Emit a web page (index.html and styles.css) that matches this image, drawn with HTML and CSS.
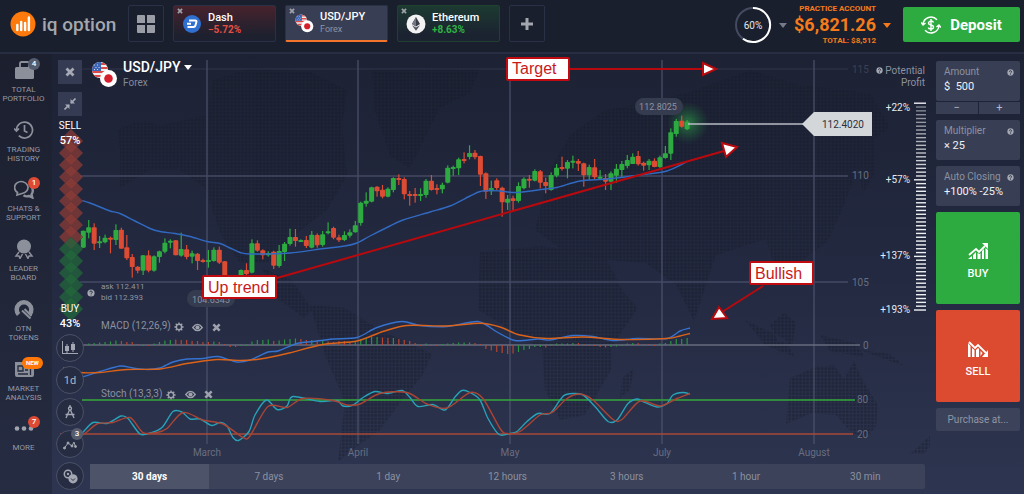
FILE: index.html
```html
<!DOCTYPE html>
<html lang="en">
<head>
<meta charset="utf-8">
<title>IQ Option – USD/JPY</title>
<link rel="stylesheet" href="styles.css">
</head>
<body>
<svg class="defs" aria-hidden="true">
  <defs>
    <symbol id="i-flags" viewBox="0 0 28 28">
      <clipPath id="us"><circle cx="10" cy="10" r="8"/></clipPath>
      <g clip-path="url(#us)">
        <rect width="20" height="20" fill="#f0eef0"/>
        <path d="M2 8h16M2 12h16M2 16h16M2 4h16" stroke="#dd4a48" stroke-width="2"/>
        <rect width="11" height="11" fill="#3c66b4"/>
        <path d="M4 5h1M7 5h1M5.500 7.500h1M8.500 7.500h1M4 9.500h1M7 9.500h1" stroke="#c9d6ef"/>
      </g>
      <circle cx="18.500" cy="18.500" r="8.500" fill="#fff"/>
      <circle cx="18.500" cy="18.500" r="4.300" fill="#d51f2c"/>
    </symbol>
    <symbol id="i-close" viewBox="0 0 10 10"><path d="M1.500 1.500l7 7M8.500 1.500l-7 7" stroke="currentColor" stroke-width="2.800"/></symbol>
    <symbol id="i-help" viewBox="0 0 10 10"><circle cx="5" cy="5" r="4.500" fill="#a3a8b3"/><path d="M3.500 4a1.500 1.500 0 1 1 2.200 1.300q-.7.400-.7 1M5 7v1" fill="none" stroke="#23283a" stroke-width="1.200"/></symbol>
    <symbol id="i-gear" viewBox="0 0 12 12"><circle cx="6" cy="6" r="3.200" fill="none" stroke="currentColor" stroke-width="1.800"/><path d="M6 .5v2M6 9.500v2M.5 6h2M9.500 6h2M2.100 2.100l1.400 1.400M8.500 8.500l1.400 1.400M9.900 2.100L8.500 3.500M3.500 8.500L2.100 9.900" stroke="currentColor" stroke-width="1.600"/></symbol>
    <symbol id="i-eye" viewBox="0 0 12 12"><path d="M.8 6Q6-1 11.200 6 6 13 .8 6z" fill="none" stroke="currentColor" stroke-width="1.400"/><circle cx="6" cy="6" r="2.300" fill="currentColor"/></symbol>
    <pattern id="dots" width="3.600" height="3.600" patternUnits="userSpaceOnUse"><rect width="2.600" height="2.600" rx=".8" fill="#151a26"/></pattern>
    <radialGradient id="glow"><stop offset="0" stop-color="#2fa84a" stop-opacity=".65"/><stop offset="1" stop-color="#1f7a3c" stop-opacity="0"/></radialGradient>
  </defs>
</svg>

<header class="topbar">
  <div class="brand">
    <svg width="26" height="26" viewBox="0 0 26 26" aria-hidden="true"><circle cx="13" cy="13" r="12.500" fill="#ff7a0c"/><path d="M7.300 19v-5M11.200 19v-8M15.100 19v-7M18.900 19V6.500" stroke="#fff" stroke-width="2.400" stroke-linecap="round"/></svg>
    <span>iq option</span>
  </div>
  <button class="square" aria-label="Layouts"><svg width="18" height="18" viewBox="0 0 18 18"><path d="M1 0h6q1 0 1 1v7H0V1q0-1 1-1zM10 0h7q1 0 1 1v7h-8zM0 10h8v8H1q-1 0-1-1zM10 10h8v7q0 1-1 1h-7z" fill="#9a9da5"/></svg></button>
  <nav class="tabs" aria-label="Assets">
    <button class="tab down">
      <svg class="x"><use href="#i-close"/></svg>
      <svg class="coin" viewBox="0 0 20 20"><circle cx="10" cy="10" r="9" fill="#2f6fd0"/><path d="M7 6.500h6.200q1.600 0 1.200 1.500l-1 3.500q-.4 1.500-2 1.500H5.500M5 9.800h4" fill="none" stroke="#fff" stroke-width="2"/></svg>
      <span><b>Dash</b><em>−5.72%</em></span>
    </button>
    <button class="tab active">
      <svg class="x"><use href="#i-close"/></svg>
      <svg class="coin"><use href="#i-flags"/></svg>
      <span><b>USD/JPY</b><small>Forex</small></span>
    </button>
    <button class="tab up">
      <svg class="x"><use href="#i-close"/></svg>
      <svg class="coin" viewBox="0 0 20 20"><circle cx="10" cy="10" r="9.500" fill="#f2f2f2"/><path d="M10 3l4 7-4 2.500L6 10z" fill="#3a3d48"/><path d="M10 3v9.500L6 10z" fill="#737784"/><path d="M6 11.200l4 2.400 4-2.400-4 5.500z" fill="#50535f"/></svg>
      <span><b>Ethereum</b><em>+8.63%</em></span>
    </button>
  </nav>
  <button class="square" aria-label="Add asset"><svg width="14" height="14" viewBox="0 0 14 14"><path d="M7 1v12M1 7h12" stroke="#a3a6ad" stroke-width="3"/></svg></button>
  <div class="account">
    <svg class="ring" width="38" height="38" viewBox="0 0 38 38"><circle cx="19" cy="19" r="17" fill="none" stroke="#444a60" stroke-width="2"/><path d="M19 2a17 17 0 1 1-10 30.700" fill="none" stroke="#fff" stroke-width="2"/><text x="19" y="22.500" text-anchor="middle">60%</text></svg>
    <i class="caret"></i>
    <div class="balance"><small>PRACTICE ACCOUNT</small><strong>$6,821.26</strong><small>TOTAL: $8,512</small></div>
    <i class="caret orange"></i>
  </div>
  <button class="deposit">
    <svg width="20" height="20" viewBox="0 0 20 20" fill="none" stroke="#fff" stroke-width="1.400"><path d="M2 9.500A8 8 0 0 1 16 4.800M18 10.500A8 8 0 0 1 4 15.200M0 7.500l2 2.500 2.500-2M20 12.500L18 10l-2.500 2"/><path d="M12.500 7.500Q12 6 10 6T7.500 8q0 1.500 2.500 2t2.500 2Q12.500 14 10 14t-2.500-1.500M10 4v12"/></svg>
    Deposit
  </button>
</header>

<main class="workspace">
  <nav class="side" aria-label="Main">
    <a href="#"><span class="icon"><svg width="20" height="20" viewBox="0 0 20 20"><rect x="1" y="7" width="19" height="12" rx="1.500" fill="#8c909b"/><path d="M6 7V3.500Q6 2 7.500 2h6Q15 2 15 3.500V7" fill="none" stroke="#8c909b" stroke-width="1.800"/></svg><b class="badge grey">4</b></span>TOTAL<br>PORTFOLIO</a>
    <a href="#"><span class="icon"><svg width="20" height="20" viewBox="0 0 20 20" fill="none" stroke="#8c909b" stroke-width="1.700"><path d="M2.500 10a8 8 0 1 1 2.300 5.700M0 8.500l2.500 2.500L5 8.500M10.500 5v6l3 1.500"/></svg></span>TRADING<br>HISTORY</a>
    <a href="#"><span class="icon"><svg width="20" height="20" viewBox="0 0 20 20" fill="none" stroke="#8c909b" stroke-width="1.700"><path d="M3.500 13.500A6.700 6 0 1 1 8 14.500L3 16z"/><path d="M16.500 7q2.500 1.500 2.300 5-.2 2-1.300 3.500l.8 3-3.300-1.500q-3 1-5.500-.8" stroke-width="2.400"/></svg><b class="badge red">1</b></span>CHATS &amp;<br>SUPPORT</a>
    <a href="#"><span class="icon"><svg width="20" height="20" viewBox="0 0 20 20"><circle cx="10" cy="7.500" r="7" fill="#8c909b"/><path d="M5 13l-3 4h3l1 2.500L8.500 15M15 13l3 4h-3l-1 2.500L11.500 15" fill="none" stroke="#8c909b" stroke-width="1.500"/></svg></span>LEADER<br>BOARD</a>
    <a href="#"><span class="icon"><svg width="20" height="20" viewBox="0 0 20 20"><path d="M4.600 15.500A7.300 7.300 0 1 1 15.500 15.400" fill="none" stroke="#8c909b" stroke-width="4.500"/><path d="M8 11.500l8.500 8M10.500 10l7 7" stroke="#8c909b" stroke-width="2"/></svg></span>OTN<br>TOKENS</a>
    <a href="#"><span class="icon"><svg width="20" height="20" viewBox="0 0 20 20"><path d="M1 3h15v4h4v9q0 2-2 2H3q-2 0-2-2z" fill="#8c909b"/><path d="M4 7h5v5H4zM11 8h3M11 11h3M4 15h10M16.500 7v9" fill="none" stroke="#242a3d" stroke-width="1.300"/></svg><b class="badge new">NEW</b></span>MARKET<br>ANALYSIS</a>
    <a href="#"><span class="icon"><svg width="20" height="20" viewBox="0 0 20 20" fill="#a0a4ae"><circle cx="3" cy="10.500" r="2.300"/><circle cx="10" cy="10.500" r="2.300"/><circle cx="17" cy="10.500" r="2.300"/></svg><b class="badge red">7</b></span>MORE</a>
  </nav>

  <section class="stage" aria-label="USD/JPY chart">
    <svg class="chart" viewBox="52 54 878 440">
      <g fill="url(#dots)" opacity=".4">
        <path d="M120 150l-3-20 20-9 25 4 45-10 6-35 38-12 60 4 36 18-5 35 5 50-20 35-32 25-25 28-30 0-20-30-15-45-25-18-30 0-30 18z"/>
        <path d="M372 70l108-2-10 25-30 15-15 30-15 30-20-12-15-45z"/>
        <path d="M262 268l30 12 20 30-8 8-30-22zM310 305l35 3 35 22 52 24-10 22-20 24-22 30-28 20-14 12 7-60-20-47z"/>
        <path d="M480 252l60-6 64 8 18 36 16 18-26 38-1 24-26 45-25 5-15-30-3-40-42-27-22-13z"/>
        <path d="M622 378l12-10-4 22-10 8z"/>
        <path d="M535 230l15-60 20-35 35-25 45-8 40-10 60-22 50 15 70 8 20 35-15 10 0 35-12 20-5-25-15 40-15 33-20 15-20 20-14-12-8-25-50 16-22 66-18-36-30-22-50-4-35-10z"/>
        <path d="M745 320l20 25 30 12-10-18zM770 325l14-12 12 10-4 22-14-4zM820 335l35 8 10 14-35-6zM860 350l30 4 14 12"/>
        <path d="M786 424l4-46 26-11 18-2 10 14 10-18 8 18 16 26-2 22-12 12-16-10-12-14-24-2zM930 436l8 0-14 18-14 0z"/>
      </g>
      <g stroke="#505670" stroke-width="1.500" opacity=".75">
        <path d="M80 69H848" opacity=".35"/><path d="M80 176H848M80 282H848"/>
        <path d="M207 60V444M358 60V444M510 60V444M662 60V444M814 60V444"/>
        <path d="M82 345H860" stroke="#7c8192"/>
      </g>
      <path d="M82 400H855" stroke="#35a83b" stroke-width="1.500"/><path d="M60 434H853" stroke="#a84a38" stroke-width="1.300"/>
      <g class="axis">
        <text x="852" y="73" opacity=".4">115</text><text x="852" y="179">110</text><text x="852" y="286">105</text>
        <text x="863" y="349">0</text><text x="857" y="403">80</text><text x="857" y="438">20</text>
        <g text-anchor="middle"><text x="207" y="456">March</text><text x="358" y="456">April</text><text x="510" y="456">May</text><text x="662" y="456">July</text><text x="814" y="456">August</text></g>
      </g>
      <circle cx="688" cy="123" r="21" fill="url(#glow)"/>
      <g id="candles"></g>
      <g id="lines" fill="none" stroke-linejoin="round" stroke-width="1.400"></g>
      <g id="sentiment"></g>

      <path d="M688 124H806" stroke="#b9bdc6" stroke-width="1.300"/>
      <path d="M802 124l12-12h58v24h-58z" fill="#d3d7da"/><text class="price" x="843" y="128" text-anchor="middle">112.4020</text>
      <g class="pill"><rect x="635" y="98" width="48" height="17" rx="8.500"/><text x="658" y="110" text-anchor="middle">112.8025</text>
      <rect x="187" y="290" width="48" height="17" rx="8.500"/><text x="211" y="303" text-anchor="middle">104.6345</text></g>

      <g class="quote"><use href="#i-help" x="87" y="289" width="8" height="8"/><text x="101" y="289">ask 112.411</text><text x="101" y="300">bid 112.393</text></g>
      <g class="indicator"><text x="101" y="329">MACD (12,26,9)</text><use href="#i-gear" x="174" y="322" width="10" height="10"/><use href="#i-eye" x="192" y="322" width="11" height="11"/><use href="#i-close" x="212" y="323" width="9" height="9"/>
      <text x="101" y="397">Stoch (13,3,3)</text><use href="#i-gear" x="166" y="390" width="10" height="10"/><use href="#i-eye" x="185" y="389" width="11" height="11"/><use href="#i-close" x="204" y="390" width="9" height="9"/></g>

      <g id="ladder"></g>
      <g class="levels" text-anchor="end"><text x="910" y="111">+22%</text><text x="910" y="183">+57%</text><text x="910" y="259">+137%</text><text x="910" y="313">+193%</text></g>

      <g class="note">
        <path d="M277 278L724 151M570 69H704M763 286L722 312"/>
        <path class="head" d="M722 143l15 4-11 10zM703 63l13 6-13 6zM719 307l8 11-15 1z"/>
        <rect x="507" y="58" width="62" height="22" rx="1"/><rect x="203" y="276" width="73" height="22" rx="1"/><rect x="750" y="262" width="63" height="22" rx="1"/>
        <text x="512" y="74">Target</text><text x="208" y="293">Up trend</text><text x="755" y="279">Bullish</text>
      </g>
    </svg>

    <div class="overlay">
      <div class="tools">
        <button class="box" aria-label="Close chart"><svg width="10" height="10"><use href="#i-close"/></svg></button>
        <button class="box" aria-label="Shrink chart"><svg width="12" height="12" viewBox="0 0 12 12"><path d="M6.500 1v4.500H11zM1 6.500h4.500V11z" fill="#a6aab4"/><path d="M7 5l4.500-4.500M5 7L.5 11.500" stroke="#a6aab4" stroke-width="1.600"/></svg></button>
        <p class="mood"><span>SELL</span><b>57%</b></p>
        <p class="mood buyers"><span>BUY</span><b>43%</b></p>
        <button class="round" aria-label="Chart type"><svg width="16" height="14" viewBox="0 0 16 14" fill="#a3a7b1"><path d="M0 0h1v12h15v1H0z"/><path d="M3 5h4v5H3zM9 3h4v6H9zM4.500 3h1v9h-1zM10.500 1h1v10h-1z"/></svg></button>
        <button class="round">1d</button>
        <button class="round" aria-label="Drawing tools"><svg width="14" height="14" viewBox="0 0 14 14" fill="none" stroke="#a3a7b1" stroke-width="1.300"><circle cx="7" cy="3.500" r="1.500"/><path d="M7 0v2M6.500 5L3 13M7.500 5L11 13M2.500 9.500h9"/></svg></button>
        <button class="round" aria-label="Indicators"><svg width="14" height="12" viewBox="0 0 14 12" fill="#a3a7b1" stroke="#a3a7b1"><path d="M1.500 10l3.500-5 4 3 2-4 1.500 5" fill="none"/><circle cx="1.500" cy="10" r="1"/><circle cx="5" cy="5" r="1"/><circle cx="9" cy="8" r="1"/><circle cx="12.500" cy="8.500" r="1"/></svg><b class="badge grey">3</b></button>
        <button class="round" aria-label="Trades"><svg width="15" height="15" viewBox="0 0 15 15"><circle cx="5" cy="5" r="3.700" fill="none" stroke="#a3a7b1" stroke-width="1.500"/><circle cx="5" cy="5" r="1.200" fill="#a3a7b1"/><circle cx="10" cy="9.800" r="4.600" fill="#a3a7b1"/><path d="M8 9.500l2 2 2-2" fill="none" stroke="#2c3249"/></svg></button>
      </div>
      <div class="pane">
        <div class="head">
          <button class="pair"><svg width="28" height="28"><use href="#i-flags"/></svg><span><b>USD/JPY <i class="caret white"></i></b><small>Forex</small></span></button>
          <p class="potential"><svg width="7" height="7"><use href="#i-help"/></svg> Potential<br>Profit</p>
        </div>
        <nav class="ranges" aria-label="Time range"><button class="on">30 days</button><button>7 days</button><button>1 day</button><button>12 hours</button><button>3 hours</button><button>1 hour</button><button>30 min</button></nav>
      </div>
    </div>
  </section>

  <aside class="deal">
    <div class="amount">
      <label class="field"><span>Amount <svg width="7" height="7"><use href="#i-help"/></svg></span><input type="text" value="$  500"></label>
      <div class="steps"><button>−</button><button>+</button></div>
    </div>
    <label class="field"><span>Multiplier <svg width="7" height="7"><use href="#i-help"/></svg></span><input type="text" value="× 25"></label>
    <label class="field"><span>Auto Closing <svg width="7" height="7"><use href="#i-help"/></svg></span><input type="text" value="+100% -25%"></label>
    <button class="trade buy"><svg width="21" height="17" viewBox="0 0 21 17"><path d="M1 12l7-6 3 3 6-6" fill="none" stroke="#fff" stroke-width="1.800"/><path d="M14 0h6v6zM0 16l4-3v3zM5 12l3-3v7H5zM9.500 10l2 1 1-1v6h-3zM14 8l2-2v10h-2zM17.500 5L20 7v9h-2.500z" fill="#fff"/></svg>BUY</button>
    <button class="trade sell"><svg width="21" height="17" viewBox="0 0 21 17"><path d="M1 1l6 6 3-3 8 8" fill="none" stroke="#fff" stroke-width="1.800"/><path d="M20 16h-6l6-7zM0 2l2.500 3v11H0zM4 7l2.500 2v7H4zM8 9l2-2 1 1v8H8zM12.500 10l2 2-2 3z" fill="#fff"/></svg>SELL</button>
    <button class="later">Purchase at...</button>
  </aside>
</main>
<script src="chart.js"></script>
</body>
</html>
```
FILE: styles.css
```css
* { box-sizing: border-box; }
body { margin: 0; min-height: 100vh; display: flex; flex-direction: column; font-family: Roboto, "Liberation Sans", sans-serif; color: #fff; background: linear-gradient(#1b2031, #232940 55%, #2e3550); }
button { font: inherit; color: inherit; border: 0; padding: 0; background: none; cursor: pointer; }
p { margin: 0; }
.defs { position: absolute; width: 0; height: 0; }

.topbar { display: flex; align-items: flex-start; height: 54px; padding: 5px 4px 0 10px; background: #1a1f2d; border-bottom: 2px solid #272d42; }
.brand { display: flex; align-items: center; gap: 6px; width: 118px; height: 38px; color: #a4a7ae; font: 500 19px Roboto, sans-serif; white-space: nowrap; }
.square { display: grid; place-items: center; width: 36px; height: 37px; border: 1px solid #2a3046; border-radius: 2px; }
.tabs { display: flex; gap: 9px; margin: 0 9px; }
.tab { display: flex; align-items: center; gap: 6px; width: 103px; height: 37px; padding-left: 3px; border: 1px solid #2a3046; border-radius: 2px; text-align: left; }
.tab.down { background: linear-gradient(#47232d, #1d202e 85%); }
.tab.up { background: linear-gradient(#1c3a31, #1b2230 85%); border-color: #22402f; }
.tab.active { background: #383e54; border-bottom: 2px solid #f4742b; }
.tab .x { align-self: flex-start; width: 6px; height: 6px; margin-top: 2px; margin-right: -7px; color: #9fa2aa; }
.tab .coin { width: 20px; height: 20px; }
.tab span { display: flex; flex-direction: column; }
.tab b { font-size: 11px; line-height: 12px; font-weight: 500; }
.tab em { font: bold 10px/12px Roboto, sans-serif; color: #e04f44; }
.tab.up em { color: #2fb344; }
.tab small { font-size: 9px; line-height: 12px; color: #8f93a2; }

.account { display: flex; align-items: center; gap: 7px; margin-left: auto; margin-right: 12px; height: 40px; }
.ring text { font-size: 10px; fill: #e6e7ea; }
.balance { display: flex; flex-direction: column; align-items: flex-end; color: #f57b1a; font-weight: 500; }
.balance small { font-size: 8px; line-height: 10px; font-weight: 700; }
.balance strong { font-size: 18px; line-height: 22px; font-weight: 700; }
.caret { display: inline-block; border: 4px solid transparent; border-top: 5px solid #757a88; border-bottom: 0; }
.caret.orange { border-top-color: #f57b1a; }
.caret.white { border-top-color: #fff; vertical-align: 2px; }
.deposit { display: flex; align-items: center; justify-content: center; gap: 9px; width: 117px; height: 35px; margin-top: 2px; border-radius: 2px; background: #2eab40; font-weight: 700; font-size: 15px; }

.workspace { flex: 1; display: grid; grid-template-columns: 52px minmax(0, 1fr) 94px; }
.side { display: grid; grid-auto-rows: 1fr; padding-bottom: 22px; background: linear-gradient(#1b1f2e, #262c42); }
.side a { padding-top: 6px; margin-right: 5px; color: #9499a6; font-size: 8px; line-height: 9px; text-align: center; text-decoration: none; }
.side .icon { display: grid; justify-content: center; position: relative; margin-bottom: 5px; }
.badge { position: absolute; display: grid; place-items: center; height: 12px; min-width: 12px; border-radius: 6px; font-size: 8px; line-height: 12px; font-weight: 500; color: #fff; }
.badge.grey { background: #555c6e; }
.badge.red { background: #de4a33; }
.badge.new { background: #ff7708; padding: 0 4px; font-size: 6px; font-weight: 700; }
.icon .badge { left: 28px; top: -2px; }
.icon .badge.new { left: 22px; }
.round .badge { right: 0; top: -3px; }

.stage { display: grid; align-items: start; }
.chart, .overlay { grid-area: 1 / 1; }
.chart { width: 100%; display: block; }
.overlay { display: grid; grid-template-columns: 38px minmax(0, 1fr); height: 100%; pointer-events: none; }
.overlay button { pointer-events: auto; }
.tools { display: flex; flex-direction: column; align-items: center; gap: 4px; padding: 6px 2px 4px 0; }
.box { display: grid; place-items: center; width: 24px; height: 24px; margin-bottom: 4px; background: #343b52; color: #a6aab4; }
.box + .box { margin-bottom: 0; }
.mood { display: flex; flex-direction: column; gap: 2px; text-align: center; }
.mood span { font-size: 10px; line-height: 12px; }
.mood b { font-weight: 500; font-size: 11px; line-height: 13px; }
.buyers { margin-top: auto; }
.round { display: grid; place-items: center; position: relative; width: 28px; height: 28px; flex: none; border: 1px solid #4a5066; border-radius: 50%; background: #262c42; color: #b2b5be; font-size: 11px; }
.pane { display: flex; flex-direction: column; justify-content: space-between; padding: 6px 5px 5px 0; }
.head { display: flex; justify-content: space-between; }
.pair { display: flex; gap: 5px; text-align: left; }
.pair span { display: flex; flex-direction: column; }
.pair b { font-weight: 500; font-size: 14px; line-height: 15px; }
.pair small { font-size: 10px; line-height: 16px; color: #84899a; }
.potential { text-align: right; padding-top: 5px; font-size: 10px; line-height: 12px; color: #8c91a0; }
.ranges { display: flex; background: #3b425a; border-radius: 2px; }
.ranges button { flex: 1; height: 25px; font-size: 10px; color: #8c91a0; }
.ranges .on { background: #4d5469; color: #fff; font-weight: 700; }

.axis text { font-size: 10px; fill: #686e80; }
.price { font-size: 10px; fill: #2a2f3c; }
.pill rect { fill: #363c50; }
.pill text { font-size: 9px; fill: #8c91a0; }
.quote text { font-size: 8px; fill: #9196a4; }
.indicator { color: #9ea2ad; }
.indicator text { font-size: 10px; fill: #8c91a0; }
.levels text { font-size: 10px; fill: #e8eaee; }
.note path { fill: none; stroke: #b80a0e; stroke-width: 2; }
.note .head { fill: #fff; }
.note rect { fill: #fff; stroke: #c00c10; stroke-width: 2; }
.note text { font: 16px "Liberation Sans", Arial, sans-serif; fill: #c81a1c; }

.deal { display: flex; flex-direction: column; gap: 6px; padding: 7px 4px 0 6px; }
.field { display: flex; flex-direction: column; height: 40px; padding: 4px 6px 0 8px; background: #383f55; border-radius: 2px; }
.field span { display: flex; align-items: center; justify-content: space-between; font-size: 10px; line-height: 14px; color: #8c91a0; }
.field input { width: 100%; padding: 0; border: 0; background: none; color: #f0f1f4; font: 11px/16px Roboto, sans-serif; white-space: pre; }
.steps { display: grid; grid-template-columns: 1fr 1fr; gap: 1px; margin-top: 1px; }
.steps button { height: 12px; background: #383f55; color: #b6bac4; font-size: 11px; line-height: 12px; }
.trade { display: flex; flex-direction: column; align-items: center; justify-content: center; gap: 7px; height: 92px; padding-top: 6px; border-radius: 2px; font-weight: 500; font-size: 11px; line-height: 13px; }
.buy { background: #2eab40; }
.sell { background: #dc4a30; }
.later { height: 23px; background: #3b425a; border-radius: 2px; color: #9095a4; font-size: 10px; }
```
FILE: chart.js
```js
const NS = 'http://www.w3.org/2000/svg';
const GREEN = '#2eab40', RED = '#dc4b33';
const START = 83.3, STEP = 5.44;

function add(parent, tag, attrs) {
  const node = document.createElementNS(NS, tag);
  for (const key in attrs) node.setAttribute(key, attrs[key]);
  parent.appendChild(node);
}
const group = id => document.getElementById(id);

// Candles: high, body top, body bottom, low (thirds of a pixel below base), colour.
const candleRuns = [
  { base: 180, rows: '152,152,203,203g 120,142,158,175g 130,142,191,210r 168,184,190,204g 164,173,187,190g 170,173,176,220r 133,150,180,195g 143,149,206,206r 165,202,235,240r 222,231,261,293r 258,260,272,280r 225,226,272,285g 211,226,272,277r 226,229,272,275g 212,214,231,248g 175,188,215,220g 178,182,188,205g 180,181,226,226r 158,207,227,230g 195,208,231,238r 212,220,230,250g 219,221,243,270r 236,240,246,248r 210,240,245,263g 202,209,243,245g 200,209,248,252r 243,244,295,298r 288,290,310,315r 288,292,310,320g 268,270,290,300g 250,270,282,285r 178,190,278,280g 181,190,212,215r 208,211,226,238r 214,219,226,230g 212,215,257,267r 195,213,258,263g 186,191,216,243g 146,171,192,197g 147,171,183,200r 178,180,183,185g 168,180,198,204r 153,164,203,205g 160,165,196,203r 153,163,195,200g 127,154,160,163g 140,144,173,178r 164,172,181,186r 154,165,180,183g 148,157,167,173g 123,136,157,158g 65,68,129,137g 37,62,71,80g 20,22,65,67g' },
  { base: 130, rows: '168,170,184,200r 165,179,200,205r 172,176,200,202g 142,144,180,187g 133,144,150,165r 142,147,193,208r 183,192,197,227r 174,192,197,218r 175,192,197,213g 147,152,195,203g 135,152,180,182r 163,174,179,193r 158,164,178,190g 106,113,158,160g 107,111,116,137g 83,88,115,135g 67,87,92,100r 46,69,81,88g 60,68,82,88r 77,78,134,168r 127,130,185,207r 152,174,184,195g 145,151,174,180r 170,173,217,260r 195,206,218,240g 197,205,213,240r 157,168,213,218g 142,146,175,178g 135,146,151,173r 118,123,152,154g 120,124,158,175r 143,156,168,190r 127,135,180,182g 102,113,137,142g' },
  { base: 90, rows: '200,231,236,242r 210,216,236,265g 197,212,215,235g 207,213,221,243r 218,220,256,290r 224,231,256,270g 207,232,262,270r 240,260,265,270g 252,264,275,300r 244,250,275,300g 222,236,257,278g 213,222,240,262g 195,210,228,235g 190,200,222,222g 183,198,223,227r 215,218,227,242r 207,212,226,240g 205,212,231,232r 197,202,231,234g 168,190,204,206g 115,127,191,210g 87,93,132,140g 77,92,110,113r 90,95,118,120g' }
];
let index = 0;
for (const run of candleRuns) {
  for (const row of run.rows.split(' ')) {
    const [high, top, bottom, low] = row.slice(0, -1).split(',').map(v => run.base + v / 3);
    const fill = row.endsWith('g') ? GREEN : RED;
    const x = START + STEP * index++;
    add(group('candles'), 'rect', { x: x - 0.6, y: high, width: 1.2, height: low - high, fill });
    add(group('candles'), 'rect', { x: x - 2.5, y: top, width: 5, height: Math.max(bottom - top, 2), rx: 0.8, fill });
  }
}

// MACD histogram, one bar per candle.
const bars = 'g-1 g1.5 g2 g2.5 g3 g3.5 g4.5 r4 r3 r3 r1 g-1 r-1 g1.5 g3 g4.5 g5 r5.5 r5 r5 r4 r4 r3 r3 g3.5 r3 r1 r-2 r-2 g-1 g-1 g3.5 g5 g5 g5.5 r4 g4.5 g5.5 g6 g6.5 r6 r5 g5 r4.5 g5 r3.5 r3 r4 r4 r3 g3 g6 g7 g8 g8 r7.5 r7 g7 r6 r5 r4 r2 r-1 g1.5 r-1 r-1 g1 g1.5 g2 g2.5 g2.5 g2.5 r2 r1 r-4 r-5.5 r-7 r-8 r-9 r-8.5 g-7 g-5 g-4 g-2 g-2 r-2.5 g1 g1.5 g1.5 g1.5 g2 r2 r1 r-1 r-1 r-2 r-2.5 g-2 g-1.5 g-1 g1.5 g2 r2 r1 r1 r-1 g1.5 g2 g4 g6 g6 g7';
bars.split(' ').forEach((bar, i) => {
  const size = Number(bar.slice(1));
  add(group('candles'), 'rect', { x: START + STEP * i - 0.6, y: size > 0 ? 345 - size : 345, width: 1.2, height: Math.abs(size), fill: bar[0] === 'g' ? '#2b9340' : '#b5452f' });
});

// Smooth curve through the points.
function curve(points, stroke) {
  const p = points.split(' ').map(s => s.split(',').map(Number));
  let d = `M${p[0]}`;
  for (let i = 0; i < p.length - 1; i++) {
    const a = p[i - 1] || p[i], b = p[i], c = p[i + 1], e = p[i + 2] || c;
    d += `C${b[0] + (c[0] - a[0]) / 7} ${b[1] + (c[1] - a[1]) / 7} ${c[0] - (e[0] - b[0]) / 7} ${c[1] - (e[1] - b[1]) / 7} ${c[0]} ${c[1]}`;
  }
  add(group('lines'), 'path', { d, stroke });
}
curve('82,200.500 90,203 100,207 110,211 120,213.500 135,221 150,228.500 160,231.500 175,233.500 190,236.500 207,241.500 220,243.500 230,248 240,252.500 250,254 290,253 320,249 345,246 357,243 370,236 390,226 403,220 430,212 450,206 470,196 480,191.500 490,190.500 500,191 517,192.500 545,189 557,187.500 580,181 607,179 640,175 667,171 687,161.700', '#3169c0');
curve('64,374 72,377 80,377.500 100,371.500 120,366 133,368 147,369.500 160,368 173,362 187,359 203,358.500 218,356.500 237,362 250,360 268,352 278,351 297,343.500 313,341.500 333,339 357,337.500 377,327.500 402,321.500 420,325.500 447,326.500 478,321.500 497,332 515,340.500 538,339 550,340 573,335.500 593,336.500 613,340.500 637,338.500 667,338.500 680,331 690,328', '#3672cf');
curve('63,368 80,372.500 100,372.500 127,369.500 160,369 187,363.500 217,359.500 240,360.500 260,359 287,353.500 323,344.500 357,341 383,331.500 407,325.500 447,326 480,323.300 500,327 520,335 547,338.500 583,337 623,339.500 667,338.500 680,336 690,333.500', '#db6319');
curve('63,434 72,436.500 82,433 93,422.500 107,423.500 121,416 128,418.500 140,434 150,433 162,427.500 173,411.500 182,412 190,419 200,419 211.500,425.500 220,422.500 227,426 233,437.500 238.500,440.500 249,431.500 255,415 266.500,400 277,409.500 287,406 293,396.500 320,401.500 337,400.500 343,406 353,405 363,397.500 375,391.500 387,393.500 402,390.500 410,397.500 418,406.500 433,404.500 445,410 455,397 462,390.500 470,392.500 480,400 488,418.500 499,434.500 510,433.500 517,431.500 527,421.500 538,413.500 550,413.500 560,400 566,394.500 582,394.500 595,406.500 608,421.500 617,420 628,403.500 637,399 643,401.500 657,407 667,403.500 673,395 683,392.500 690,394', '#27a2b8');
curve('63,432.500 82,435 97,424 113,422.500 130,417.500 143,432.500 157,432.500 167,428.500 183,412.500 203,420 223,424 243,437.500 250,436 268,406.500 287,407.500 303,398.500 333,400.500 347,405 360,404 380,393.500 407,392.500 427,404 447,408 470,392.500 483,398.500 500,428.500 507,433.500 520,431.500 540,415 552,412.500 567,398.500 580,394 593,400 613,419.500 622,419.500 640,401 660,406 677,398.500 690,393.500', '#aa4535');

// Sentiment column: overlapping diamonds, sellers above buyers.
for (let i = 0; i < 15; i++) {
  const y = 141 + i * 12;
  const sellers = i < 9;
  add(group('sentiment'), 'path', { d: `M71 ${y - 12}l12 12-12 12-12-12z`, fill: sellers ? '#8a3b36' : '#22673c', stroke: sellers ? '#5d3038' : '#1e5236', 'stroke-width': 0.7, opacity: 0.75 });
}

// Potential-profit ladder.
for (let i = 0; i < 55; i++) {
  const major = [0, 20, 40, 54].includes(i);
  add(group('ladder'), 'rect', { x: major ? 914 : 916, y: 102.5 + i * 3.83, width: major ? 12 : 10, height: 1.4, fill: '#eef0f3', opacity: major ? 1 : Math.min(1, 0.45 + i / 40) });
}
```
